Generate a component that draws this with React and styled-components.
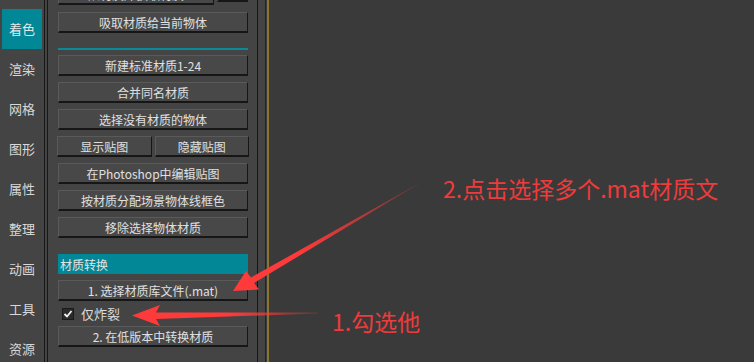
import React from "react";
import styled, { createGlobalStyle } from "styled-components";

const Global = createGlobalStyle`
  html, body { margin: 0; padding: 0; background: #3a3a3a; overflow: hidden; }
  #root { width: 754px; height: 362px; }
`;

const UI_FONT = `"Noto Sans CJK SC", "Noto Sans", "DejaVu Sans", sans-serif`;

const Root = styled.div`
  position: relative;
  display: flex;
  width: 754px;
  height: 362px;
  overflow: hidden;
  font-family: ${UI_FONT};
  background: #3a3a3a;
`;

const TabBar = styled.nav`
  width: 44px;
  flex: none;
  background: #444444;
  padding: 9px 2px 0;
  box-sizing: border-box;
  display: flex;
  flex-direction: column;
`;

const Tab = styled.div`
  height: 40px;
  flex: none;
  display: flex;
  align-items: center;
  justify-content: center;
  padding-bottom: 1px;
  box-sizing: border-box;
  font-size: 13px;
  color: ${(p) => (p.$active ? "#e6e6e6" : "#d8d8d8")};
  background: ${(p) => (p.$active ? "#028796" : "transparent")};
`;

const Splitter = styled.div`
  width: 4px;
  flex: none;
  box-sizing: border-box;
  background: #444444;
  border-left: 1px solid #181818;
  border-right: 1px solid #181818;
`;

const Panel = styled.section`
  width: 209px;
  flex: none;
  box-sizing: border-box;
  background: #444444;
  padding: 0 9px 0 10px;
  display: flex;
  flex-direction: column;
`;

const PanelEdge = styled.div`
  width: 12px;
  flex: none;
  background: linear-gradient(
    to right,
    #161616 0 1px,
    #444444 1px 8px,
    #232323 8px 9px,
    #3c3c3c 9px 10px,
    #8a7530 10px 12px
  );
`;

const Viewport = styled.main`
  flex: 1;
  background: #3a3a3a;
`;

const Button = styled.div`
  box-sizing: border-box;
  height: 21px;
  flex: none;
  display: flex;
  align-items: center;
  justify-content: center;
  background: #484848;
  border-top: 1px solid #5a5a5a;
  border-left: 1px solid #5a5a5a;
  border-right: 1px solid #161616;
  border-bottom: 2px solid #161616;
  color: #e0e0e0;
  font-size: 12px;
  white-space: nowrap;
  margin-top: ${(p) => p.$mt ?? 6}px;
  width: ${(p) => p.$w ?? "auto"};
`;

const Row = styled.div`
  display: flex;
  flex: none;
  gap: ${(p) => p.$gap ?? 4}px;
  margin-top: ${(p) => p.$mt ?? 6}px;
  margin-left: ${(p) => p.$ml ?? 0}px;
  margin-right: ${(p) => p.$mr ?? 0}px;
  align-items: flex-start;
`;

const PairButton = styled(Button)`
  flex: 1;
  margin-top: 0;
`;

const Separator = styled.div`
  height: 2px;
  flex: none;
  background: #0a8a99;
  margin-top: 15px;
  margin-bottom: -1px;
`;

const Header = styled.div`
  height: 20px;
  flex: none;
  box-sizing: border-box;
  margin-top: 16px;
  background: #028796;
  color: #e4e4e4;
  font-size: 12px;
  padding-left: 2px;
  display: flex;
  align-items: center;
`;

const CheckRow = styled.label`
  display: flex;
  align-items: center;
  height: 13px;
  flex: none;
  margin-top: 6px;
  padding-left: 4px;
  color: #dcdcdc;
  font-size: 13px;
`;

const Box = styled.span`
  width: 12px;
  height: 12px;
  box-sizing: border-box;
  background: #2b2b2b;
  border: 1px solid #1a1a1a;
  display: flex;
  align-items: center;
  justify-content: center;
  margin-right: 7px;
`;

const Overlay = styled.svg`
  position: absolute;
  left: 0;
  top: 0;
  pointer-events: none;
`;

const Note = styled.div`
  position: absolute;
  left: ${(p) => p.$x}px;
  top: ${(p) => p.$y}px;
  font-family: "Noto Sans CJK SC", "Noto Sans", sans-serif;
  font-size: 23px;
  line-height: 26px;
  color: #ee3b3b;
  white-space: nowrap;
`;

const tabs = ["着色", "渲染", "网格", "图形", "属性", "整理", "动画", "工具", "资源"];

export default function App() {
  return (
    <>
      <Global />
      <Root>
        <TabBar>
          {tabs.map((t, i) => (
            <Tab key={t} $active={i === 0}>
              {t}
            </Tab>
          ))}
        </TabBar>
        <Splitter />
        <Panel>
          <Row $mt={-16} $gap={3}>
            <Button $mt={0} $w="156px">从材质库获取材质</Button>
            <Button $mt={-3} $w="31px" />
          </Row>
          <Button $mt={7}>吸取材质给当前物体</Button>
          <Separator />
          <Button>新建标准材质1-24</Button>
          <Button>合并同名材质</Button>
          <Button>选择没有材质的物体</Button>
          <Row $gap={3} $ml={-1} $mr={-1}>
            <PairButton>显示贴图</PairButton>
            <PairButton>隐藏贴图</PairButton>
          </Row>
          <Button>在Photoshop中编辑贴图</Button>
          <Button>按材质分配场景物体线框色</Button>
          <Button>移除选择物体材质</Button>
          <Header>材质转换</Header>
          <Button>1. 选择材质库文件(.mat)</Button>
          <CheckRow>
            <Box>
              <svg width="10" height="10" viewBox="0 0 10 10">
                <path d="M1.5 5 L4 7.5 L8.5 2" fill="none" stroke="#f2f2f2" strokeWidth="1.8" />
              </svg>
            </Box>
            仅炸裂
          </CheckRow>
          <Button>2. 在低版本中转换材质</Button>
        </Panel>
        <PanelEdge />
        <Viewport />
        <Overlay width="754" height="362" viewBox="0 0 754 362">
          <defs>
            <linearGradient id="g1" gradientUnits="userSpaceOnUse" x1="425" y1="180" x2="300" y2="252">
              <stop offset="0" stopColor="#ff3a3a" stopOpacity="0.2" />
              <stop offset="1" stopColor="#ff3a3a" stopOpacity="1" />
            </linearGradient>
            <linearGradient id="g2" gradientUnits="userSpaceOnUse" x1="318" y1="313" x2="230" y2="314">
              <stop offset="0" stopColor="#ff3a3a" stopOpacity="0.2" />
              <stop offset="1" stopColor="#ff3a3a" stopOpacity="1" />
            </linearGradient>
          </defs>
          <polygon
            points="425,180 251,277.5 246,271 233,291 259,289.5 254,283"
            fill="url(#g1)"
          />
          <polygon
            points="318,312.5 156,312.5 160,305 132,315.5 160,326 156,319 318,313.5"
            fill="url(#g2)"
          />
        </Overlay>
        <Note $x={443} $y={175}>2.点击选择多个.mat材质文</Note>
        <Note $x={332} $y={308}>1.勾选他</Note>
      </Root>
    </>
  );
}
